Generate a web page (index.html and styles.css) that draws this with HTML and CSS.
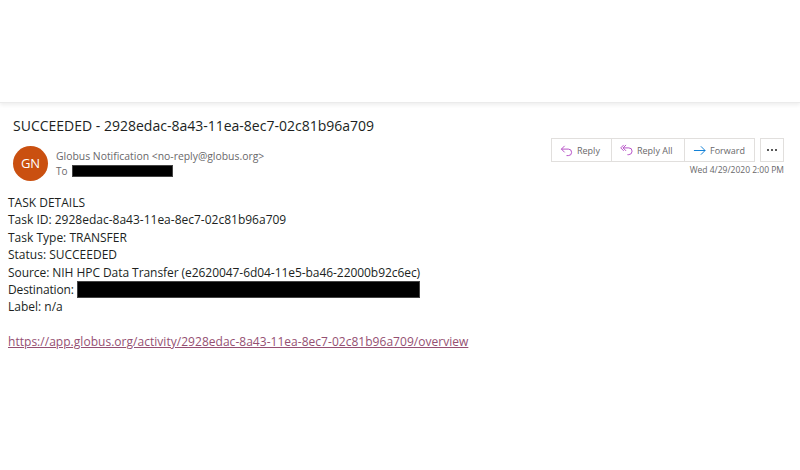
FILE: index.html
```html
<!DOCTYPE html>
<html lang="en">

<head>
    <meta charset="UTF-8">
    <title>SUCCEEDED - 2928edac-8a43-11ea-8ec7-02c81b96a709</title>
    <link rel="stylesheet" href="styles.css">
</head>

<body>
    <div class="topgap"></div>
    <div class="mail">
        <h1 class="subject">SUCCEEDED - 2928edac-8a43-11ea-8ec7-02c81b96a709</h1>
        <div class="head">
            <div class="avatar">GN</div>
            <div class="who">
                <div class="from">Globus Notification &lt;no-reply@globus.org&gt;</div>
                <div class="to">To <span class="redact redact-to"></span></div>
            </div>
            <div class="actions">
                <div class="btns">
                    <div class="group">
                        <button class="btn btn-reply">
                            <svg class="ico" viewBox="0 0 14 14"><path d="M5 2 1.500 5.500 5 9M1.500 5.500H9a3.500 3.500 0 0 1 3.500 3.500 3.500 3.500 0 0 1-3.500 3.500H7" fill="none" stroke="#b146c2" stroke-width="1"/></svg>
                            Reply
                        </button>
                        <button class="btn btn-all">
                            <svg class="ico" viewBox="0 0 14 14"><path d="M4 1 .8 4.200 4 7.400M6.500 1 3.300 4.200l3.200 3.200M3.300 4.200H9.500a3.500 3.500 0 0 1 3.500 3.500 3.800 3.800 0 0 1-3.500 3.800H8" fill="none" stroke="#b146c2" stroke-width="1"/></svg>
                            Reply All
                        </button>
                        <button class="btn btn-fwd">
                            <svg class="ico" viewBox="0 0 14 14"><path d="M1 7h12M8.500 2.500 13 7l-4.500 4.500" fill="none" stroke="#0078d4" stroke-width="1"/></svg>
                            Forward
                        </button>
                    </div>
                    <button class="btn more"><i></i><i></i><i></i></button>
                </div>
                <div class="date">Wed 4/29/2020 2:00 PM</div>
            </div>
        </div>
        <div class="body">
            <div>TASK DETAILS</div>
            <div>Task ID: 2928edac-8a43-11ea-8ec7-02c81b96a709</div>
            <div>Task Type: TRANSFER</div>
            <div>Status: SUCCEEDED</div>
            <div class="source">Source: NIH HPC Data Transfer (e2620047-6d04-11e5-ba46-22000b92c6ec)</div>
            <div class="dest">Destination: <span class="redact redact-dest"></span></div>
            <div>Label: n/a</div>
            <br>
            <a href="#" class="link">https://app.globus.org/activity/2928edac-8a43-11ea-8ec7-02c81b96a709/overview</a>
        </div>
    </div>
</body>

</html>
```

FILE: styles.css
```css
body {
    margin: 0;
    background-color: #fff;
    font-family: 'Open Sans', 'Noto Sans', sans-serif;
    color: #201f1e;
}

.topgap {
    height: 102px;
    border-bottom: solid 1px #ebebeb;
    box-shadow: 0 2px 4px #eeeeee;
}

.mail {
    padding: 13px 16px 0 8px;
}

.subject {
    margin: 0 0 0 5px;
    font-size: 14px;
    font-weight: 400;
    line-height: 20px;
}

.head {
    display: flex;
    margin-top: 2px;
    padding-left: 5px;
}

.avatar {
    width: 35px;
    height: 35px;
    margin-top: 8px;
    border-radius: 50%;
    background-color: #ca5010;
    color: #fff;
    font-size: 13px;
    line-height: 35px;
    text-align: center;
}

.who {
    flex: 1;
    margin-left: 8px;
    padding-top: 11px;
    font-size: 10.400px;
    line-height: 14px;
    color: #69686a;
}

.to {
    display: flex;
    align-items: center;
    gap: 4px;
    margin-top: 1px;
    font-size: 10px;
}

.redact {
    display: inline-block;
    background-color: #000;
    border: solid 1px #444;
}

.redact-to {
    width: 99px;
    height: 10px;
}

.redact-dest {
    width: 341px;
    height: 15px;
    vertical-align: -4px;
}

.actions {
    text-align: right;
}

.btns {
    display: flex;
    justify-content: flex-end;
    gap: 6px;
}

.group {
    display: flex;
}

.btn {
    display: flex;
    align-items: center;
    gap: 4px;
    height: 24px;
    padding: 0 0 0 8px;
    background-color: #fff;
    border: solid 1px #e1dfdd;
    margin-left: -1px;
    color: #69686a;
    font-family: inherit;
    font-size: 9px;
}

.btn-reply {
    width: 61px;
}

.btn-all {
    width: 74px;
}

.btn-fwd {
    width: 71px;
}

.ico {
    width: 13px;
    height: 13px;
}

.more {
    gap: 2px;
    width: 24px;
    padding: 0;
    justify-content: center;
}

.more i {
    width: 2px;
    height: 2px;
    background-color: #222;
    border-radius: 50%;
}

.date {
    margin-top: 2px;
    font-size: 8.500px;
    line-height: 12px;
    color: #69686a;
}

.body {
    margin-top: 13px;
    font-size: 12px;
    line-height: 17.400px;
    color: #201f1e;
}

.source {
    letter-spacing: -0.060px;
}

.dest {
    letter-spacing: -0.150px;
}

.link {
    color: #954f72;
    letter-spacing: 0.030px;
}
```
